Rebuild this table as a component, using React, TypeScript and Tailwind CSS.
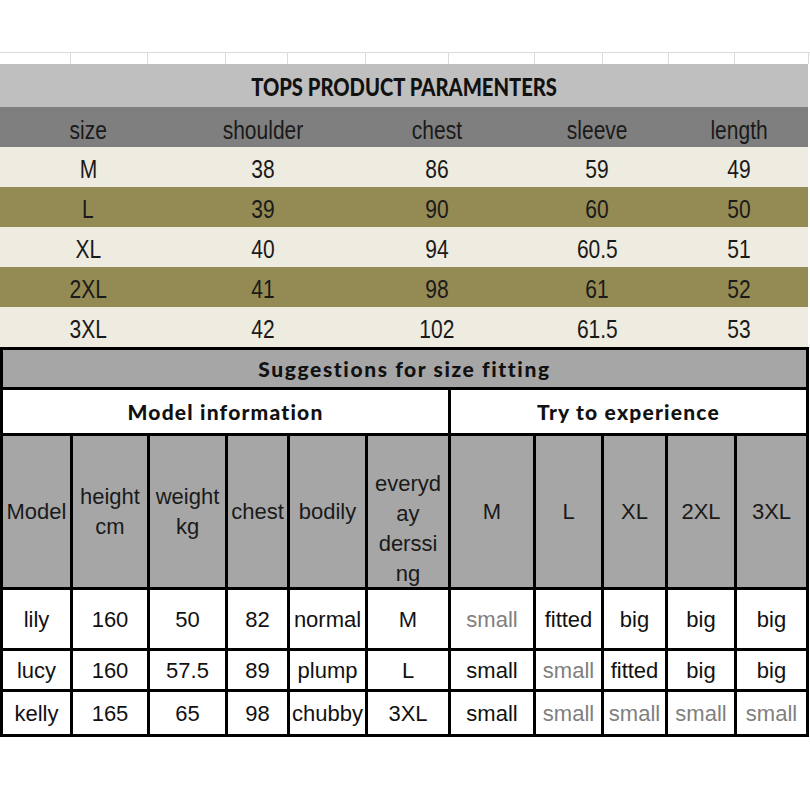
import React from "react";

// size chart rows for the tops table
const sizes = [
  { size: "M", shoulder: "38", chest: "86", sleeve: "59", length: "49" },
  { size: "L", shoulder: "39", chest: "90", sleeve: "60", length: "50" },
  { size: "XL", shoulder: "40", chest: "94", sleeve: "60.5", length: "51" },
  { size: "2XL", shoulder: "41", chest: "98", sleeve: "61", length: "52" },
  { size: "3XL", shoulder: "42", chest: "102", sleeve: "61.5", length: "53" },
];

type Fit = { text: string; dim?: boolean };

const models: { cells: string[]; fits: Fit[]; h: string }[] = [
  {
    cells: ["lily", "160", "50", "82", "normal", "M"],
    fits: [{ text: "small", dim: true }, { text: "fitted" }, { text: "big" }, { text: "big" }, { text: "big" }],
    h: "h-[58px]",
  },
  {
    cells: ["lucy", "160", "57.5", "89", "plump", "L"],
    fits: [{ text: "small" }, { text: "small", dim: true }, { text: "fitted" }, { text: "big" }, { text: "big" }],
    h: "h-[38px]",
  },
  {
    cells: ["kelly", "165", "65", "98", "chubby", "3XL"],
    fits: [
      { text: "small" },
      { text: "small", dim: true },
      { text: "small", dim: true },
      { text: "small", dim: true },
      { text: "small", dim: true },
    ],
    h: "h-[42px]",
  },
];

const stripCols = [71, 77, 78, 62, 78, 83, 86, 68, 66, 66, 74];

function Squeezed({ children }: { children: React.ReactNode }) {
  return <span className="inline-block scale-x-[0.84] whitespace-nowrap">{children}</span>;
}

function TopsTable() {
  return (
    <div className="w-[808px]">
      <div className="h-[43px] bg-[#bfbfbf] flex items-center justify-center pt-[2px] font-['Lato',sans-serif] font-black text-[24px] text-[#111]">
        <Squeezed>TOPS PRODUCT PARAMENTERS</Squeezed>
      </div>
      <div className="grid grid-cols-[176px_174px_174px_146px_138px] h-[40px] bg-[#7f7f7f] text-[25px] text-[#1a1a1a]">
        {["size", "shoulder", "chest", "sleeve", "length"].map((h) => (
          <div key={h} className="flex items-center justify-center pt-[5px]">
            <Squeezed>{h}</Squeezed>
          </div>
        ))}
      </div>
      {sizes.map((row, i) => (
        <div
          key={row.size}
          className={`grid grid-cols-[176px_174px_174px_146px_138px] h-[40px] text-[25px] text-[#1a1a1a] ${
            i % 2 === 0 ? "bg-[#eeebe0]" : "bg-[#948a54]"
          }`}
        >
          {[row.size, row.shoulder, row.chest, row.sleeve, row.length].map((v, j) => (
            <div key={j} className="flex items-center justify-center pt-[4px]">
              <Squeezed>{v}</Squeezed>
            </div>
          ))}
        </div>
      ))}
    </div>
  );
}

function FittingTable() {
  const headCell = "bg-[#a6a6a6] flex items-center justify-center text-center text-[22px] leading-[30px] text-[#1a1a1a]";
  const bannerText = "font-['Lato',sans-serif] font-black text-[21px] tracking-[1.2px]";
  return (
    <div className="w-[809px] bg-black p-[3px] grid gap-[3px] grid-cols-[67px_74px_75px_59px_75px_80px_82px_65px_61px_66px_69px] text-[22px] text-[#111]">
      <div className={`col-span-11 h-[37px] bg-[#a6a6a6] flex items-center justify-center ${bannerText} tracking-[1.6px]`}>
        Suggestions for size fitting
      </div>
      <div className={`col-span-6 h-[43px] bg-white flex items-center justify-center ${bannerText}`}>
        Model information
      </div>
      <div className={`col-span-5 h-[43px] bg-white flex items-center justify-center ${bannerText}`}>
        Try to experience
      </div>

      <div className={`${headCell} h-[151px]`}>Model</div>
      <div className={headCell}>
        height
        <br />
        cm
      </div>
      <div className={headCell}>
        weight
        <br />
        kg
      </div>
      <div className={headCell}>chest</div>
      <div className={headCell}>bodily</div>
      <div className="bg-[#a6a6a6] flex items-end justify-center text-center text-[22px] leading-[30px] text-[#1a1a1a] overflow-hidden">
        <span className="-mb-[2px]">
          everyd
          <br />
          ay
          <br />
          derssi
          <br />
          ng
        </span>
      </div>
      {["M", "L", "XL", "2XL", "3XL"].map((s) => (
        <div key={s} className={headCell}>
          {s}
        </div>
      ))}

      {models.map((m) => (
        <React.Fragment key={m.cells[0]}>
          {m.cells.map((c, i) => (
            <div key={i} className={`${m.h} bg-white flex items-center justify-center whitespace-nowrap overflow-hidden`}>
              {c}
            </div>
          ))}
          {m.fits.map((f, i) => (
            <div
              key={"f" + i}
              className={`bg-white flex items-center justify-center whitespace-nowrap overflow-hidden ${
                f.dim ? "text-[#808080]" : "text-[#111]"
              }`}
            >
              {f.text}
            </div>
          ))}
        </React.Fragment>
      ))}
    </div>
  );
}

export default function App() {
  return (
    <div className="w-[810px] h-[798px] bg-white font-['Liberation_Sans',Arial,sans-serif] overflow-hidden">
      <div className="h-[52px]" />
      <div className="flex h-[12px] border-t border-[#d9d9d9]">
        {stripCols.map((w, i) => (
          <div key={i} style={{ width: w }} className="border-r border-[#dcdcdc] shrink-0" />
        ))}
      </div>
      <TopsTable />
      <FittingTable />
    </div>
  );
}
